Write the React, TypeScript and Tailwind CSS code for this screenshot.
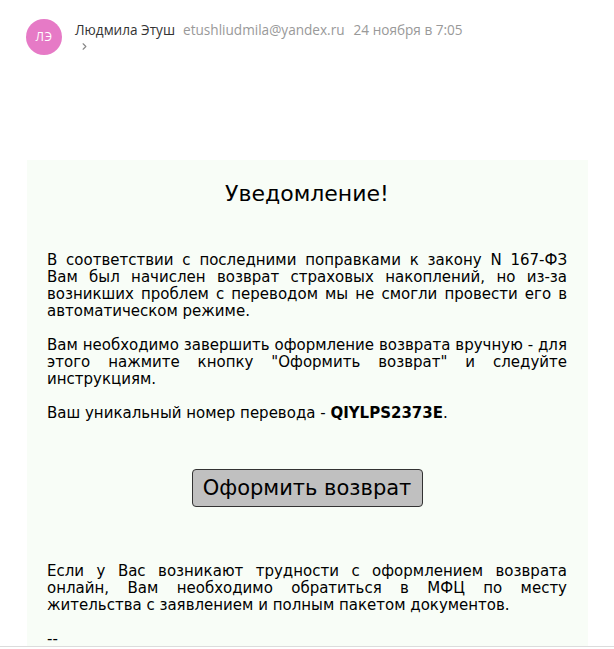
import { ChevronRight } from "lucide-react";

const body = "font-['DejaVu_Sans',sans-serif] text-[15px] leading-[17px] text-black";

export default function App() {
  return (
    <div className="w-[614px] h-[649px] bg-white overflow-hidden flex flex-col">
      <div className="h-[646px] overflow-hidden">
        {/* message header */}
        <div className="flex items-start gap-[13px] pl-[26px] pt-[19px] h-[55px]">
          <div className="w-[36px] h-[36px] rounded-full bg-[#e67ac6] flex items-center justify-center shrink-0">
            <span className="text-white text-[12px] font-['Open_Sans',sans-serif] tracking-[0.5px]">ЛЭ</span>
          </div>
          <div className="flex flex-col pt-[3px] font-['Open_Sans',sans-serif] text-[13.6px] leading-[16px]">
            <div className="flex items-baseline gap-[8px]">
              <span className="text-[#333]">Людмила Этуш</span>
              <span className="text-[#999]">etushliudmila@yandex.ru</span>
              <span className="text-[#999] ml-[1px]">24 ноября в 7:05</span>
            </div>
            <ChevronRight className="w-[11px] h-[11px] text-[#888] mt-[3px] ml-[4px]" strokeWidth={2.5} />
          </div>
        </div>

        {/* letter body */}
        <div className="mt-[105px] ml-[27px] w-[561px] bg-[#f8fdf7] pt-[21px] pl-[20px] pr-[21px] pb-[20px]">
          <h1 className="font-['DejaVu_Sans',sans-serif] text-[22px] leading-[26px] text-black text-center">
            Уведомление!
          </h1>
          <div className={`${body} text-justify mt-[45px]`}>
            <p>
              В соответствии с последними поправками к закону N 167-ФЗ Вам был начислен возврат страховых
              накоплений, но из-за возникших проблем с переводом мы не смогли провести его в автоматическом режиме.
            </p>
            <p className="mt-[17px]">
              Вам необходимо завершить оформление возврата вручную - для этого нажмите кнопку "Оформить возврат" и
              следуйте инструкциям.
            </p>
            <p className="mt-[17px]">
              Ваш уникальный номер перевода - <b className="font-bold">QIYLPS2373E</b>.
            </p>
          </div>
          <div className="flex justify-center mt-[47px]">
            <button className="h-[38px] w-[231px] bg-[#c0c0c0] border border-[#333] rounded-[4px] font-['DejaVu_Sans',sans-serif] text-[21px] leading-[26px] text-black">
              Оформить возврат
            </button>
          </div>
          <div className={`${body} text-justify mt-[56px]`}>
            <p>
              Если у Вас возникают трудности с оформлением возврата онлайн, Вам необходимо обратиться в МФЦ по
              месту жительства с заявлением и полным пакетом документов.
            </p>
            <p className="mt-[17px]">--</p>
          </div>
        </div>
      </div>
      <div className="h-[1px] bg-[#dcdcdc]" />
      <div className="h-[2px] bg-white" />
    </div>
  );
}
